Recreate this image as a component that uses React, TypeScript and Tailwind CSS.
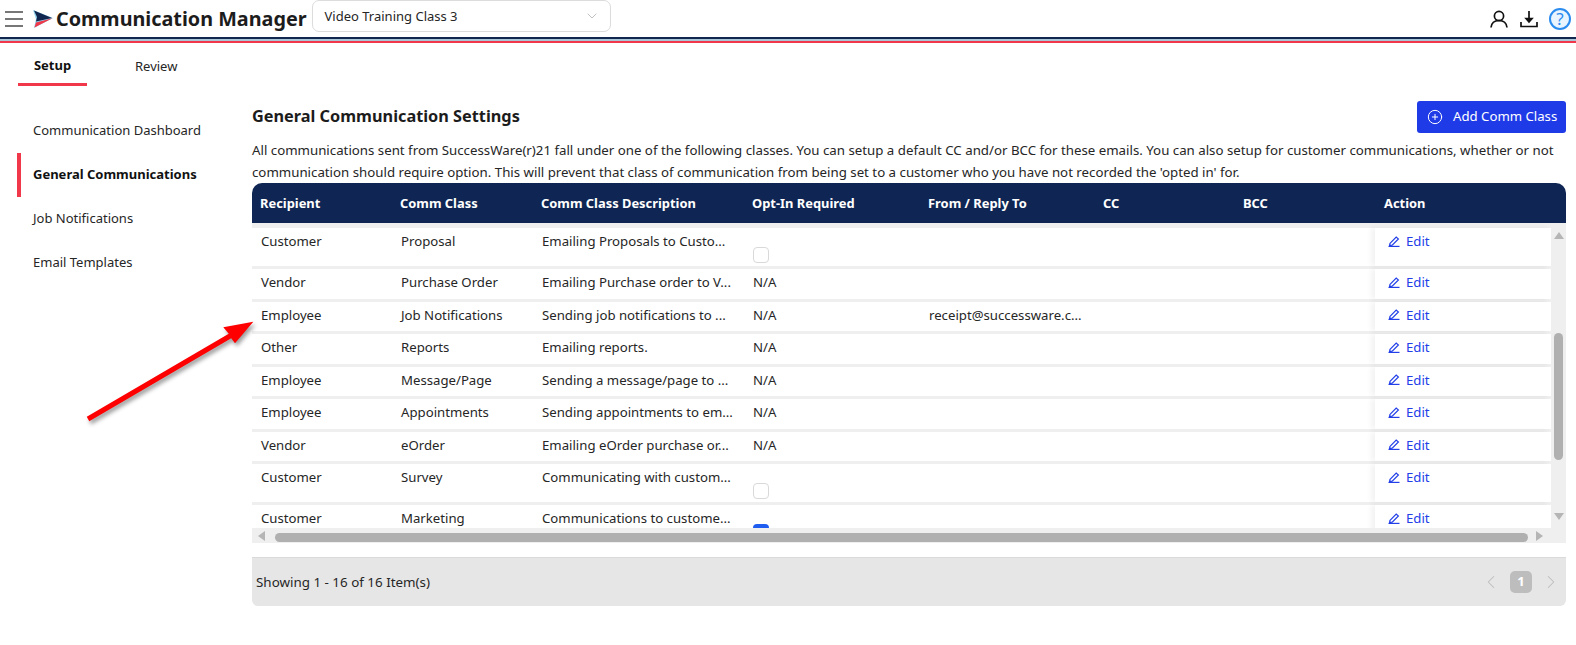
import { ChevronDown, ChevronLeft, ChevronRight, PlusCircle } from "lucide-react";

const font = "font-['Noto_Sans','Open_Sans',sans-serif]";

const rows = [
  { recipient: "Customer", cls: "Proposal", desc: "Emailing Proposals to Custo...", opt: "empty", from: "", tall: true },
  { recipient: "Vendor", cls: "Purchase Order", desc: "Emailing Purchase order to V...", opt: "N/A", from: "" },
  { recipient: "Employee", cls: "Job Notifications", desc: "Sending job notifications to ...", opt: "N/A", from: "receipt@successware.c..." },
  { recipient: "Other", cls: "Reports", desc: "Emailing reports.", opt: "N/A", from: "" },
  { recipient: "Employee", cls: "Message/Page", desc: "Sending a message/page to ...", opt: "N/A", from: "" },
  { recipient: "Employee", cls: "Appointments", desc: "Sending appointments to em...", opt: "N/A", from: "" },
  { recipient: "Vendor", cls: "eOrder", desc: "Emailing eOrder purchase or...", opt: "N/A", from: "" },
  { recipient: "Customer", cls: "Survey", desc: "Communicating with custom...", opt: "empty", from: "", tall: true },
  { recipient: "Customer", cls: "Marketing", desc: "Communications to custome...", opt: "checked", from: "", tall: true },
];

const columns = ["Recipient", "Comm Class", "Comm Class Description", "Opt-In Required", "From / Reply To", "CC", "BCC", "Action"];
const gridCols = "grid-cols-[140px_141px_211px_176px_175px_140px_140px_176px]";

const sideItems = ["Communication Dashboard", "General Communications", "Job Notifications", "Email Templates"];

function EditIcon() {
  return (
    <svg viewBox="0 0 12 11" className="w-3 h-[11px]" fill="none" stroke="currentColor" strokeWidth="1.2">
      <path d="M2 7.4 L8.2 1 L10.4 3 L4.2 9.2 L1.6 9.6 Z" />
      <path d="M0.5 10.4 H11.5" />
    </svg>
  );
}

function Logo() {
  return (
    <svg viewBox="0 0 20 18" className="w-5 h-[18px]">
      <path d="M0 0 L20 8 L1 18 L3 9 Z" fill="#8fd0ea" />
      <path d="M1 0.5 L19 8 L3 11.5 L4 7 Z" fill="#12274f" />
      <path d="M19.5 8.2 L1.5 17.5 L3 12.5 Z" fill="#f0384a" />
    </svg>
  );
}

function Row({ row }: { row: (typeof rows)[number] }) {
  return (
    <div className={`grid ${gridCols} ${row.tall ? "h-[38px]" : "h-[29.5px]"} shrink-0 bg-white`}>
      <div className="pl-[9px] leading-[26px] truncate">{row.recipient}</div>
      <div className="pl-[9px] leading-[26px] truncate">{row.cls}</div>
      <div className="pl-[9px] leading-[26px] truncate">{row.desc}</div>
      <div className="pl-[9px] leading-[26px]">
        {row.opt === "N/A" && "N/A"}
        {row.opt === "empty" && <div className="w-4 h-4 mt-[19px] rounded-[4px] border border-[#d9d9d9] bg-white" />}
        {row.opt === "checked" && <div className="w-4 h-4 mt-[19px] rounded-[4px] bg-[#1f5cf0]" />}
      </div>
      <div className="pl-[9px] leading-[26px] truncate">{row.from}</div>
      <div />
      <div />
      <div className="pl-[13px] flex items-start gap-[6px] leading-[26px] text-[#2340e8] shadow-[-4px_0_5px_rgba(0,0,0,0.05)]">
        <span className="h-[26px] flex items-center"><EditIcon /></span>
        <span>Edit</span>
      </div>
    </div>
  );
}

export default function App() {
  return (
    <div className={`${font} relative w-[1576px] h-[645px] bg-white overflow-hidden text-[13px] text-[#262626]`}>
      {/* Top bar */}
      <div className="h-[37px] flex items-center pl-[5px]">
        <svg viewBox="0 0 18 16" className="w-[18px] h-4" stroke="#777" strokeWidth="2">
          <path d="M0 1 H18 M0 8 H18 M0 15 H18" />
        </svg>
        <div className="ml-[10px]"><Logo /></div>
        <h1 className="ml-[3px] text-[19.8px] font-bold text-[#1c1c1c] whitespace-nowrap">Communication Manager</h1>
        <div className="ml-[5px] mb-[5px] w-[299px] h-[32px] flex items-center justify-between pl-[12px] pr-[10px] border border-[#dcdcdc] rounded-[7px]">
          <span className="pt-px">Video Training Class 3</span>
          <ChevronDown className="w-4 h-4 text-[#b5b5b5]" strokeWidth={1.25} />
        </div>
        <div className="ml-auto flex items-center pr-[5px]">
          <svg viewBox="0 0 18 18" className="w-[18px] h-[18px]" fill="none" stroke="#111" strokeWidth="1.7">
            <circle cx="9" cy="6" r="4.6" />
            <path d="M1 17.5 C1.5 13 4.5 10.5 9 10.5 C13.5 10.5 16.5 13 17 17.5" />
          </svg>
          <svg viewBox="0 0 18 18" className="ml-[12px] w-[18px] h-[18px]" fill="none" stroke="#111" strokeWidth="1.7">
            <path d="M9 1 V11" />
            <path d="M6 8.5 L9 12 L12 8.5 Z" fill="#111" />
            <path d="M1 12 V16.5 H17 V12" />
          </svg>
          <div className="ml-[11px] w-[22px] h-[22px] rounded-full border-2 border-[#2b8cf0] bg-[#e8f4ff] text-[#2b8cf0] flex items-center justify-center text-[17px] leading-none">?</div>
        </div>
      </div>
      <div className="h-[2px] bg-[#12274f]" />
      <div className="h-[2px] bg-[#a9c6d6]" />
      <div className="h-[2px] bg-[#f0384a]" />

      {/* Tabs */}
      <div className="flex h-[43px] pl-[18px]">
        <div className="w-[69px] h-[43px] border-b-[3px] border-[#f0384a] flex items-center justify-center pt-[5px] font-bold text-[#111]">Setup</div>
        <div className="ml-[48px] h-[43px] flex items-center pt-[5px]">Review</div>
      </div>

      <div className="flex">
        {/* Side menu */}
        <nav className="w-[252px] shrink-0 pt-[23px] pl-[17px]">
          {sideItems.map((item, i) => (
            <div
              key={item}
              className={`h-[44px] flex items-center pl-[12px] border-l-4 ${i === 1 ? "border-[#f0384a] font-bold text-[#111]" : "border-transparent"}`}
            >
              {item}
            </div>
          ))}
        </nav>

        {/* Main */}
        <main className="w-[1314px] pt-[15px]">
          <div className="flex items-center justify-between h-[32px]">
            <h2 className="text-[16.3px] font-bold text-[#1c1c1c] pb-[2px]">General Communication Settings</h2>
            <button className="w-[149px] h-[32px] rounded-[3px] bg-[#1f3be8] text-white text-[13.2px] flex items-center pl-[10px] gap-[10px]">
              <PlusCircle className="w-4 h-4" strokeWidth={1.5} />
              Add Comm Class
            </button>
          </div>
          <p className="mt-[6px] leading-[22px] h-[44px] whitespace-nowrap text-[13.27px]">
            All communications sent from SuccessWare(r)21 fall under one of the following classes. You can setup a default CC and/or BCC for these emails. You can also setup for customer communications, whether or not
            <br />
            communication should require option. This will prevent that class of communication from being set to a customer who you have not recorded the 'opted in' for.
          </p>

          {/* Table */}
          <div className="h-[40px] bg-[#0f2654] rounded-t-[10px] text-white text-[12.9px] font-bold pr-[15px] pt-px">
            <div className={`grid ${gridCols} h-full items-center`}>
              {columns.map((c, i) => (
                <div key={c} className={i === 7 ? "pl-[9px]" : "pl-[8px]"}>{c}</div>
              ))}
            </div>
          </div>
          <div className="flex bg-[#efefef] h-[320px]">
            <div className="w-[1299px] flex flex-col text-[13.2px]">
              <div className="h-[305px] overflow-hidden flex flex-col gap-[3px] pt-[5px]">
                {rows.map((r) => (
                  <Row key={r.cls} row={r} />
                ))}
              </div>
              {/* Horizontal scrollbar */}
              <div className="h-[15px] flex items-center pl-[6px] pr-[8px] gap-[6px]">
                <span className="w-0 h-0 border-y-[5px] border-y-transparent border-r-[7px] border-r-[#b5b5b5]" />
                <div className="h-[9px] w-[1253px] ml-[4px] mt-[3px] rounded-full bg-[#b0b0b0]" />
                <span className="ml-auto w-0 h-0 border-y-[5px] border-y-transparent border-l-[7px] border-l-[#b5b5b5]" />
              </div>
            </div>
            {/* Vertical scrollbar */}
            <div className="w-[15px] flex flex-col items-center pt-[9px]">
              <span className="w-0 h-0 border-x-[5px] border-x-transparent border-b-[7px] border-b-[#b5b5b5]" />
              <div className="w-[9px] h-[127px] mt-[94px] rounded-full bg-[#b0b0b0]" />
              <span className="mt-[53px] w-0 h-0 border-x-[5px] border-x-transparent border-t-[7px] border-t-[#b5b5b5]" />
            </div>
          </div>

          {/* Footer */}
          <div className="mt-[14px] h-[49px] bg-[#e6e6e6] border-t border-[#dadada] rounded-b-[6px] flex items-center pl-[4px] pr-[4px]">
            <span className="pt-px text-[13.4px]">Showing 1 - 16 of 16 Item(s)</span>
            <div className="ml-auto flex items-center">
              <ChevronLeft className="w-[22px] h-[22px] text-[#bdbdbd]" strokeWidth={1.1} />
              <div className="ml-[8px] w-[22px] h-[22px] rounded-[5px] bg-[#bdbdbd] text-white font-bold flex items-center justify-center">1</div>
              <ChevronRight className="ml-[8px] w-[22px] h-[22px] text-[#bdbdbd]" strokeWidth={1.1} />
            </div>
          </div>
        </main>
      </div>

      {/* Red annotation arrow */}
      <svg className="absolute left-[80px] top-[315px] w-[180px] h-[110px] drop-shadow-[2px_3px_2px_rgba(0,0,0,0.4)]" viewBox="0 0 180 110">
        <path d="M6.75 101.8 L148.75 18.8 L143.3 12.3 L173.3 6.7 L155 28.3 L151.25 23.2 L9.25 106.2 Z" fill="#ff0000" />
      </svg>
    </div>
  );
}
